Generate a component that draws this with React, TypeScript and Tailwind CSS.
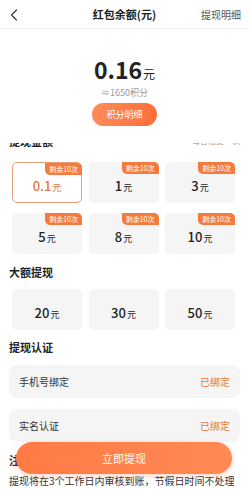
import { ChevronLeft } from "lucide-react";

const SMALL_AMOUNTS = [
  { value: "0.1", selected: true },
  { value: "1" },
  { value: "3" },
  { value: "5" },
  { value: "8" },
  { value: "10" },
];

const LARGE_AMOUNTS = ["20", "30", "50"];

const FONT = { fontFamily: '"Noto Sans CJK SC", "Noto Sans", sans-serif' };

function AmountCard({
  value,
  selected,
  badge,
}: {
  value: string;
  selected?: boolean;
  badge?: boolean;
}) {
  return (
    <div
      className={`relative flex h-[41px] items-center justify-center rounded-[5px] ${
        selected ? "border border-[#e9a07a] bg-white" : "bg-[#f5f5f5]"
      }`}
    >
      {badge && (
        <span
          className={`absolute top-0 flex h-[12px] items-center rounded-bl-[5px] rounded-tr-[5px] bg-[#f47b3e] px-[4px] text-[7px] leading-none text-white ${
            selected ? "-right-px -top-px" : "right-0"
          }`}
        >
          剩余10次
        </span>
      )}
      <span className={`mt-[2px] ${selected ? "text-[#e8743c]" : "text-[#222]"}`}>
        <span className="text-[13px] font-medium">{value}</span>
        <span className="ml-[1px] text-[9px]">元</span>
      </span>
    </div>
  );
}

function VerifyRow({ label }: { label: string }) {
  return (
    <div className="flex h-[33px] items-center justify-between rounded-[8px] bg-[#f5f5f5] px-[10px] text-[10px]">
      <span className="text-[#333]">{label}</span>
      <span className="text-[#e8743c]">已绑定</span>
    </div>
  );
}

export default function App() {
  return (
    <div className="relative flex h-[489px] w-[249px] flex-col overflow-hidden bg-white" style={FONT}>
      {/* fixed top */}
      <div className="h-[143px] shrink-0">
        <div className="relative flex h-[29px] items-center justify-center border-b border-[#f3f3f3]">
          <ChevronLeft className="absolute left-[4px] top-[5px] h-[20px] w-[20px] text-[#333]" strokeWidth={1.3} />
          <span className="text-[11px] font-bold text-[#222]">红包余额(元)</span>
          <span className="absolute right-[8px] text-[10px] text-[#555]">提现明细</span>
        </div>
        <div className="flex flex-col items-center pt-[26px]">
          <div className="flex h-[28px] items-baseline text-[#222]">
            <span className="text-[23px] font-bold leading-[28px]">0.16</span>
            <span className="ml-[1px] text-[12px]">元</span>
          </div>
          <span className="mt-[4px] text-[9px] leading-[12px] text-[#999]">≈1650积分</span>
          <div className="mt-[4px] flex h-[23px] w-[65px] items-center justify-center rounded-full bg-gradient-to-r from-[#ff8b5a] to-[#ff6d3a] text-[9px] text-white">
            积分明细
          </div>
        </div>
      </div>

      {/* scroll area */}
      <div className="flex-1 overflow-hidden">
        <div className="-mt-[9px]">
          <div className="flex h-[14px] items-center justify-between px-[9px]">
            <span className="text-[11px] font-bold text-[#222]">提现金额</span>
            <span className="text-[8px] text-[#999]">每日限提一次</span>
          </div>
          <div className="mt-[14px] grid grid-cols-3 gap-x-[6.5px] gap-y-[10px] pl-[12px] pr-[14px]">
            {SMALL_AMOUNTS.map((a) => (
              <AmountCard key={a.value} value={a.value} selected={a.selected} badge />
            ))}
          </div>

          <div className="mt-[11px] px-[9px] text-[11px] font-bold leading-[14px] text-[#222]">大额提现</div>
          <div className="mt-[10px] grid grid-cols-3 gap-x-[6.5px] pl-[12px] pr-[14px]">
            {LARGE_AMOUNTS.map((v) => (
              <AmountCard key={v} value={v} />
            ))}
          </div>

          <div className="mt-[10px] px-[9px] text-[11px] font-bold leading-[14px] text-[#222]">提现认证</div>
          <div className="mt-[11px] flex flex-col gap-[11px] pl-[9px] pr-[9px]">
            <VerifyRow label="手机号绑定" />
            <VerifyRow label="实名认证" />
          </div>

          <div className="mt-[11px] px-[9px] text-[11px] font-bold leading-[14px] text-[#222]">注意事项</div>
          <div className="mt-[7px] whitespace-nowrap px-[9px] text-[10px] leading-[14px] text-[#333]">
            提现将在3个工作日内审核到账，节假日时间不处理
          </div>
        </div>
      </div>

      {/* floating button */}
      <div className="absolute bottom-[15px] left-[16px] right-[17px] flex h-[32px] items-center justify-center rounded-full bg-gradient-to-r from-[#ff7a45] to-[#ff8a55] text-[11px] text-white shadow-[0_2px_6px_rgba(255,110,60,0.3)]">
        立即提现
      </div>
    </div>
  );
}
